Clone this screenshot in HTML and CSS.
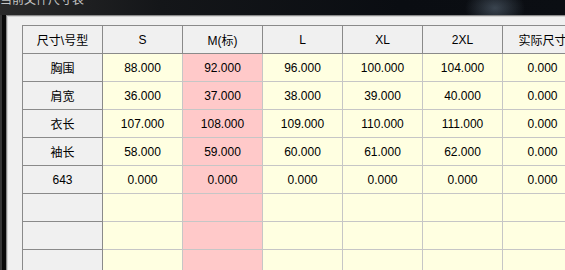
FILE: index.html
```html
<!DOCTYPE html>
<html lang="zh">
<head>
  <meta charset="UTF-8" />
  <title>当前文件尺寸表</title>
  <link rel="stylesheet" href="styles.css">
</head>
<body>
  <div class="titlebar"><span class="title">当前文件尺寸表</span></div>

  <div class="frame">
    <div class="panel">
      <table class="size-table">
        <colgroup>
          <col><col><col class="base"><col><col><col><col>
        </colgroup>
        <thead>
          <tr>
            <th>尺寸\号型</th>
            <th>S</th>
            <th>M(标)</th>
            <th>L</th>
            <th>XL</th>
            <th>2XL</th>
            <th>实际尺寸</th>
          </tr>
        </thead>
        <tbody>
          <tr>
            <th>胸围</th>
            <td>88.000</td><td class="base">92.000</td><td>96.000</td><td>100.000</td><td>104.000</td><td>0.000</td>
          </tr>
          <tr>
            <th>肩宽</th>
            <td>36.000</td><td class="base">37.000</td><td>38.000</td><td>39.000</td><td>40.000</td><td>0.000</td>
          </tr>
          <tr>
            <th>衣长</th>
            <td>107.000</td><td class="base">108.000</td><td>109.000</td><td>110.000</td><td>111.000</td><td>0.000</td>
          </tr>
          <tr>
            <th>袖长</th>
            <td>58.000</td><td class="base">59.000</td><td>60.000</td><td>61.000</td><td>62.000</td><td>0.000</td>
          </tr>
          <tr>
            <th>643</th>
            <td>0.000</td><td class="base">0.000</td><td>0.000</td><td>0.000</td><td>0.000</td><td>0.000</td>
          </tr>
          <!-- empty rows -->
          <tr>
            <th></th>
            <td></td><td class="base"></td><td></td><td></td><td></td><td></td>
          </tr>
          <tr>
            <th></th>
            <td></td><td class="base"></td><td></td><td></td><td></td><td></td>
          </tr>
          <tr>
            <th></th>
            <td></td><td class="base"></td><td></td><td></td><td></td><td></td>
          </tr>
        </tbody>
      </table>
    </div>
  </div>
</body>
</html>
```

FILE: styles.css
```css
html, body {
  margin: 0;
  padding: 0;
  height: 100%;
}

body {
  background: #0a0a0a;
  font-family: "Liberation Sans", "Noto Sans CJK SC", sans-serif;
  font-size: 12px;
  color: #000;
  overflow: hidden;
}

.titlebar {
  height: 15px;
  overflow: hidden;
  background:
    radial-gradient(ellipse 30px 20px at 495px 8px, rgba(90, 105, 120, 0.6), transparent),
    linear-gradient(to right, #2a2a2a, #141619 160px, #0a0d12 400px, #0b0e13);
}

.title {
  display: block;
  margin-top: -7px;
  line-height: 12px;
  font-family: "Noto Sans CJK SC", sans-serif;
  font-size: 12px;
  color: #c4c4c4;
}

.frame {
  display: flex;
  height: calc(100% - 15px);
  overflow: hidden;
  border-left: 2px solid #363636;
  padding-left: 4px;
}

.panel {
  flex: 1;
  background: #f0f0f0;
  border-left: 1px solid #8a8a8a;
  border-top: 1px solid #8a8a8a;
  box-shadow: inset 1px 1px 0 #d4d4d4;
  padding: 9px 0 0 15px;
}

.size-table {
  border-collapse: collapse;
  table-layout: fixed;
  width: 561px;
  min-width: 561px;
}

.size-table tr {
  height: 28px;
}

.size-table th,
.size-table td {
  padding: 0;
  text-align: center;
  white-space: nowrap;
  overflow: hidden;
}

.size-table th {
  font-weight: normal;
  background: #f0f0f0;
  border: 1px solid #8a8a8a;
}

.size-table td {
  background: #ffffe1;
  border: 1px solid #c6c6c6;
}

.size-table td.base {
  background: #ffc9c9;
}
```
